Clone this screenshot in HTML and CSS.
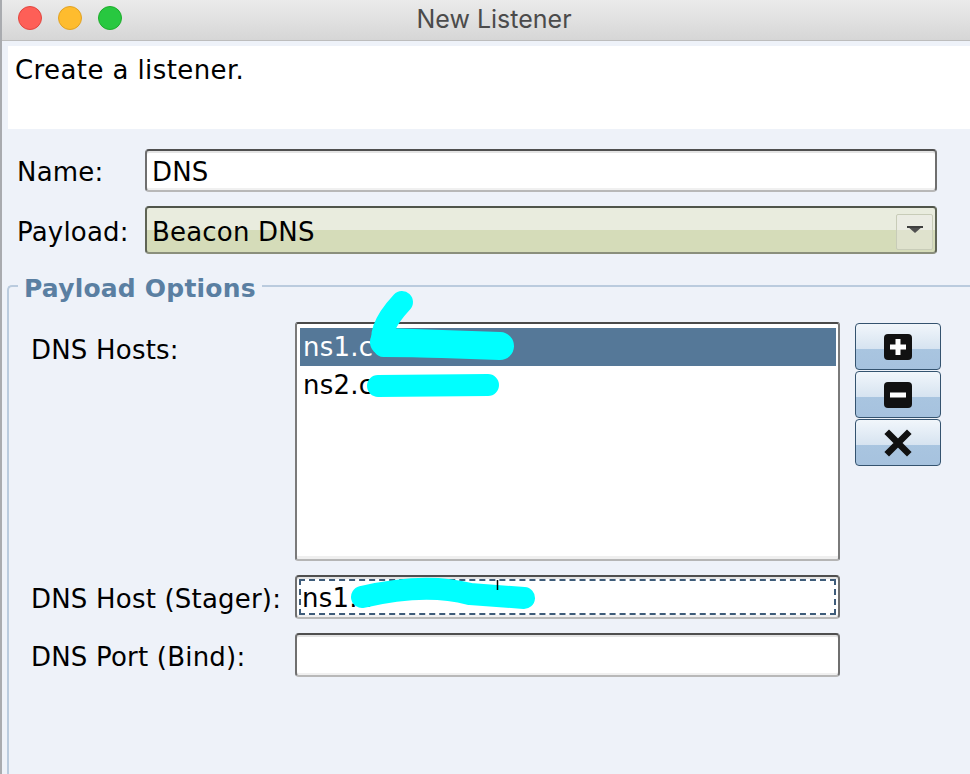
FILE: index.html
```html
<!DOCTYPE html>
<html>
<head>
<meta charset="utf-8">
<title>New Listener</title>
<link rel="stylesheet" href="styles.css">
</head>
<body>
<div class="window">
  <div class="titlebar">
    <div class="lights">
      <span class="light red"></span>
      <span class="light yellow"></span>
      <span class="light green"></span>
    </div>
    <div class="title">New Listener</div>
  </div>
  <div class="content">
    <div class="desc">Create a listener.</div>
    <div class="top-form">
      <label class="lbl">Name:</label>
      <div class="field">DNS</div>
      <label class="lbl">Payload:</label>
      <div class="combo">
        <span class="combo-text">Beacon DNS</span>
        <span class="combo-btn"><svg width="16" height="8" viewBox="0 0 16 8"><path d="M0 0H16L8 7Z" fill="#505050"/><rect x="0" y="0" width="16" height="2" fill="#3f3f3f"/></svg></span>
      </div>
    </div>
    <fieldset class="group">
      <legend>Payload Options</legend>
      <div class="opts">
        <label class="lbl lbl-top">DNS Hosts:</label>
        <div class="list">
          <div class="item selected">ns1.c</div>
          <div class="item">ns2.c</div>
        </div>
        <div class="btns">
          <button class="btn"><svg width="30" height="28" viewBox="0 0 30 28"><rect x="1" y="1" width="28" height="26" rx="4" fill="#111"/><rect x="12.5" y="6" width="5" height="16" fill="#fff"/><rect x="7" y="11.5" width="16" height="5" fill="#fff"/></svg></button>
          <button class="btn"><svg width="30" height="28" viewBox="0 0 30 28"><rect x="1" y="1" width="28" height="26" rx="4" fill="#111"/><rect x="7" y="11.5" width="16" height="5" fill="#fff"/></svg></button>
          <button class="btn"><svg width="28" height="28" viewBox="0 0 28 28"><path d="M5 5L23 23M23 5L5 23" stroke="#111" stroke-width="6.5" stroke-linecap="square"/></svg></button>
        </div>
        <label class="lbl">DNS Host (Stager):</label>
        <div class="field focus"><span class="focus-ring"></span>ns1.c</div>
        <div></div>
        <label class="lbl">DNS Port (Bind):</label>
        <div class="field"></div>
        <div></div>
      </div>
    </fieldset>
  </div>
  <svg class="redact" width="970" height="774" viewBox="0 0 970 774">
    <g stroke="#00ffff" fill="none" stroke-linecap="round" stroke-linejoin="round">
      <path d="M402 302 Q376 330 384 346 L498 347" stroke-width="22"/>
      <path d="M384 342 L500 346" stroke-width="28"/>
      <path d="M378 386 L488 385" stroke-width="22"/>
      <path d="M362 597 Q425 582 470 594 L524 598" stroke-width="22"/>
    </g>
    <line x1="497.5" y1="580" x2="497.5" y2="590" stroke="#000" stroke-width="1.5"/>
  </svg>
</div>
</body>
</html>
```
FILE: styles.css
```css
* { box-sizing: border-box; }
html, body { margin: 0; padding: 0; }
body {
  width: 970px;
  height: 774px;
  overflow: hidden;
  font-family: "DejaVu Sans", "Noto Sans", sans-serif;
  color: #000;
}
.window {
  position: relative;
  width: 970px;
  height: 774px;
  background: #eef2f9;
  border-left: 2px solid #a9abaf;
  overflow: hidden;
}
.titlebar {
  position: relative;
  height: 41px;
  background: linear-gradient(#ebebeb, #d6d6d6);
  border-bottom: 1px solid #bdbdbd;
  display: flex;
  align-items: center;
  justify-content: center;
}
.lights {
  position: absolute;
  left: 16px;
  top: 6px;
  display: flex;
  gap: 16px;
}
.light {
  width: 24px;
  height: 24px;
  border-radius: 50%;
  display: block;
}
.red { background: #fe5f57; border: 1px solid #e2463f; }
.yellow { background: #febc2e; border: 1px solid #e1a223; }
.green { background: #28c840; border: 1px solid #1dad2b; }
.title {
  font-family: Inter, "Open Sans", sans-serif;
  font-size: 25px;
  color: #4b4b4b;
  margin-top: -3px;
  margin-left: 16px;
}
.content {
  padding: 5px 0 0 6px;
}
.desc {
  height: 83px;
  background: #fff;
  font-size: 26px;
  letter-spacing: 0.4px;
  line-height: 30px;
  padding: 9px 0 0 7px;
}
.top-form {
  display: grid;
  grid-template-columns: 128px 792px;
  row-gap: 14px;
  margin-top: 20px;
  padding-left: 9px;
  align-items: center;
}
.lbl {
  font-size: 26px;
  letter-spacing: 0.2px;
  line-height: 30px;
  white-space: nowrap;
  padding-top: 3px;
}
.field {
  position: relative;
  height: 44px;
  background: #fff;
  border-radius: 4px;
  border: 2px solid;
  border-color: #4f4f4f #6f6f6f #b8b8b8 #6f6f6f;
  box-shadow: inset 0 2px 0 #e4e4e4, inset 0 -2px 0 #f0f0f0;
  font-size: 26px;
  letter-spacing: 0.2px;
  line-height: 38px;
  padding: 2px 0 0 5px;
  white-space: nowrap;
}
.top-form .field { height: 43px; }
.combo {
  height: 48px;
  border-radius: 4px;
  border: 2px solid;
  border-color: #50554a #5f6455 #8a8f7c #5f6455;
  background: linear-gradient(#e9ecde 0, #e9ecde 50%, #d5dcb9 50%, #d5dcb9 100%);
  display: flex;
  align-items: center;
  justify-content: space-between;
  padding: 0 2px 0 5px;
}
.combo-text { font-size: 26px; letter-spacing: 0.2px; line-height: 30px; padding-top: 4px; }
.combo-btn {
  width: 37px;
  height: 36px;
  margin-top: 3px;
  border: 1px solid #c8ccb8;
  border-radius: 2px;
  background: linear-gradient(#ebece3 0, #ebece3 45%, #dfe2cd 45%, #dfe2cd 100%);
  display: flex;
  align-items: center;
  justify-content: center;
  padding-bottom: 4px;
}
.group {
  margin: 14px 0 0 -1px;
  padding: 18px 0 0 22px;
  border: 2px solid #bacbde;
  border-right: none;
  border-bottom: none;
  border-top-left-radius: 5px;
  min-width: 0;
  height: 520px;
}
.group legend {
  font-size: 25px;
  font-weight: bold;
  letter-spacing: 0.2px;
  line-height: 30px;
  color: #5a7fa2;
  padding: 6px 6px 0;
  margin-left: -13px;
}
.opts {
  display: grid;
  grid-template-columns: 249px 545px 86px;
  column-gap: 15px;
  row-gap: 14px;
  align-items: center;
}
.lbl-top { align-self: start; padding-top: 13px; }
.list {
  height: 239px;
  background: #fff;
  border: 2px solid;
  border-color: #4a4a4a #7a7a7a #b5b5b5 #7a7a7a;
  border-radius: 3px;
  box-shadow: inset 0 -3px 0 #efefef;
  padding: 4px 2px 0 3px;
}
.item {
  height: 38px;
  font-size: 26px;
  letter-spacing: 0.2px;
  line-height: 38px;
  padding-left: 3px;
}
.item.selected {
  background: #557898;
  color: #fff;
}
.btns {
  align-self: start;
  display: flex;
  flex-direction: column;
  padding-top: 1px;
}
.btn {
  width: 86px;
  height: 47px;
  margin: 0;
  padding: 0;
  border: 1px solid #34536f;
  border-radius: 4px;
  background: linear-gradient(#f1f6fb 0, #d6e3f0 56%, #a9c5e0 56%, #a6c2de 100%);
  display: flex;
  align-items: center;
  justify-content: center;
}
.btn + .btn { margin-top: 1px; }
.focus-ring {
  position: absolute;
  left: 2px;
  right: 2px;
  top: 2px;
  bottom: 2px;
  border: 2px dashed #3e5c7a;
  pointer-events: none;
}
.redact {
  position: absolute;
  left: -2px;
  top: 0;
  pointer-events: none;
}
```
